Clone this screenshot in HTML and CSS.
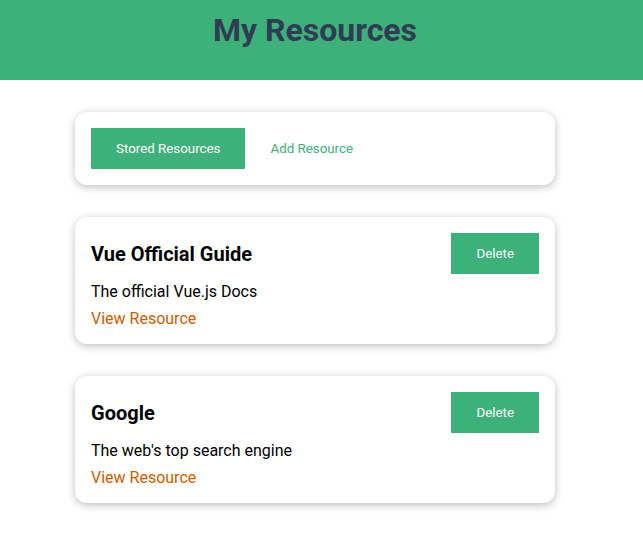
FILE: index.html
```html
<!DOCTYPE html>
<html lang="en">
<head>
<meta charset="utf-8">
<title>My Resources</title>
<link rel="stylesheet" href="styles.css">
</head>
<body>
  <header class="top-bar">
    <h1 class="title">My Resources</h1>
  </header>
  <main class="page">
    <div class="card tabs">
      <button class="btn btn-solid">Stored Resources</button>
      <button class="btn btn-flat">Add Resource</button>
    </div>
    <ul class="resource-list">
      <li class="card resource">
        <div class="resource-head">
          <h3 class="resource-title">Vue Official Guide</h3>
          <button class="btn btn-solid btn-delete">Delete</button>
        </div>
        <p class="resource-desc">The official Vue.js Docs</p>
        <nav><a class="resource-link" href="#">View Resource</a></nav>
      </li>
      <li class="card resource">
        <div class="resource-head">
          <h3 class="resource-title">Google</h3>
          <button class="btn btn-solid btn-delete">Delete</button>
        </div>
        <p class="resource-desc">The web's top search engine</p>
        <nav><a class="resource-link" href="#">View Resource</a></nav>
      </li>
    </ul>
  </main>
</body>
</html>
```
FILE: styles.css
```css
* { box-sizing: border-box; }
html, body {
  margin: 0;
  padding: 0;
  background: #ffffff;
  font-family: Roboto, "Liberation Sans", sans-serif;
}
.top-bar {
  height: 80px;
  background-color: #3eb17a;
  padding-top: 12px;
}
.title {
  width: 630px;
  margin: 0;
  font-size: 32px;
  line-height: 37px;
  font-weight: 700;
  text-align: center;
  color: #2f3d52;
}
.page {
  width: 630px;
  padding-top: 32px;
}
.card {
  width: 480px;
  margin: 0 auto 32px;
  padding: 16px;
  border-radius: 12px;
  background: #fff;
  box-shadow: 0 2px 8px rgba(0, 0, 0, 0.26);
}
.tabs {
  display: flex;
}
.btn {
  font-family: Roboto, "Liberation Sans", sans-serif;
  font-size: 13.33px;
  font-weight: 400;
  line-height: 15px;
  padding: 12px 24px;
  border: 1px solid #3eb17a;
  cursor: pointer;
}
.btn-solid {
  background-color: #3eb17a;
  color: #fff;
}
.btn-flat {
  background: transparent;
  border-color: transparent;
  color: #3eb17a;
}
.resource-list {
  list-style: none;
  margin: 0;
  padding: 0;
}
.resource-head {
  display: flex;
  justify-content: space-between;
  align-items: center;
}
.resource-title {
  margin: 8px 0;
  font-size: 20px;
  font-weight: 700;
  color: #000;
}
.resource-desc {
  margin: 8px 0;
  font-size: 16px;
  color: #000;
}
.resource-link {
  font-size: 16px;
  text-decoration: none;
  color: #ce5c00;
}
```
